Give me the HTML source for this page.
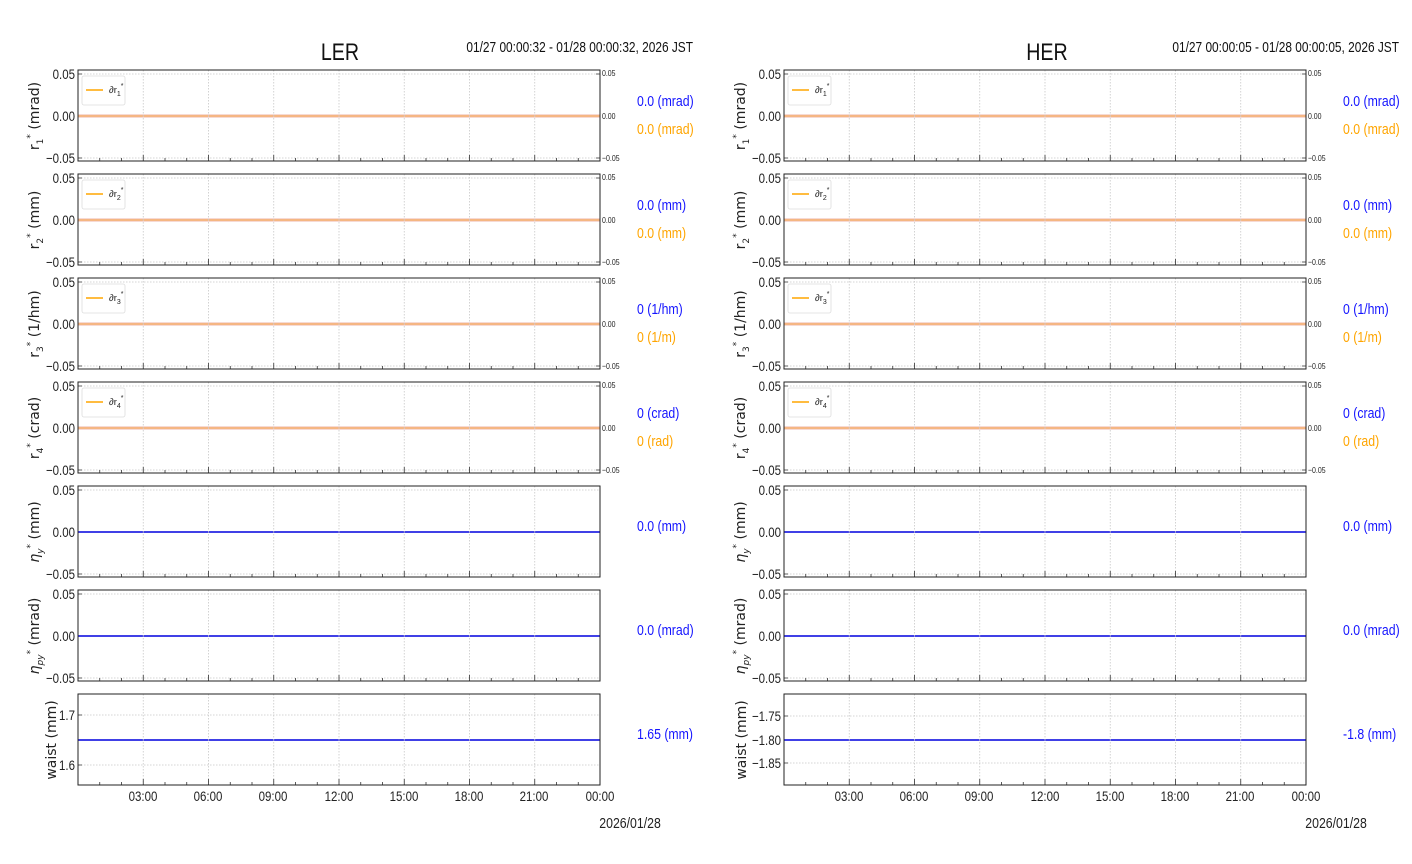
<!DOCTYPE html>
<html><head><meta charset="utf-8"><style>
html,body{margin:0;padding:0;background:#fff;}
svg{display:block;}
.n{font-family:"Liberation Sans Narrow","Liberation Sans",sans-serif;}
.t{font-size:14px;fill:#222;}
.s{font-size:8.5px;fill:#222;}
.yl{font-family:"DejaVu Sans","Liberation Sans",sans-serif;font-size:14px;fill:#222;}
.b{fill:#1515ff;font-size:15px;}
.o{fill:#ffa500;font-size:15px;}
.sq text, text.sq{transform-box:fill-box;transform:scaleX(.82);}
.sL text, text.sL{transform-origin:left center;}
.sR text, text.sR{transform-origin:right center;}
.sC text, text.sC{transform-origin:center center;}
</style></head><body>
<svg width="1412" height="864" viewBox="0 0 1412 864" xmlns="http://www.w3.org/2000/svg">
<defs>
<g id="fr">
 <g stroke="#c8c8c8" stroke-width="0.8" stroke-dasharray="1.5,1.5">
  <line x1="65.25" y1="0" x2="65.25" y2="91"/><line x1="130.5" y1="0" x2="130.5" y2="91"/>
  <line x1="195.75" y1="0" x2="195.75" y2="91"/><line x1="261" y1="0" x2="261" y2="91"/>
  <line x1="326.25" y1="0" x2="326.25" y2="91"/><line x1="391.5" y1="0" x2="391.5" y2="91"/>
  <line x1="456.75" y1="0" x2="456.75" y2="91"/>
 </g>
 <g stroke="#333" stroke-width="0.8">
  <path d="M21.75 91v-3M43.5 91v-3M87 91v-3M108.75 91v-3M152.25 91v-3M174 91v-3M217.5 91v-3M239.25 91v-3M282.75 91v-3M304.5 91v-3M348 91v-3M369.75 91v-3M413.25 91v-3M435 91v-3M478.5 91v-3M500.25 91v-3"/>
  <path d="M65.25 91v-6M130.5 91v-6M195.75 91v-6M261 91v-6M326.25 91v-6M391.5 91v-6M456.75 91v-6"/>
 </g>
 <rect x="0" y="0" width="522" height="91" fill="none" stroke="#222" stroke-width="1"/>
</g>
<g id="hg">
 <g stroke="#c8c8c8" stroke-width="0.8" stroke-dasharray="1.5,1.5">
  <line x1="0" y1="4" x2="522" y2="4"/><line x1="0" y1="88" x2="522" y2="88"/>
 </g>
 <path d="M0 4h4M0 46h4M0 88h4" stroke="#333" stroke-width="0.8"/>
</g>
<g id="rt"><path d="M522 4h-4M522 46h-4M522 88h-4" stroke="#333" stroke-width="0.8"/></g>
<g id="ol">
 <line x1="0" y1="46" x2="522" y2="46" stroke="#f3cdc6" stroke-width="3.5"/>
 <line x1="0" y1="46" x2="522" y2="46" stroke="#f7a040" stroke-width="1"/>
</g>
<g id="bl"><line x1="0" y1="46" x2="522" y2="46" stroke="#0000dd" stroke-width="1.5"/></g>
<g id="lg"><rect x="4" y="6" width="43" height="29" rx="2" fill="#fff" stroke="#ddd" stroke-width="0.8"/><line x1="8" y1="20" x2="25" y2="20" stroke="#ffa500" stroke-width="1.5"/></g>
</defs>

<!-- LEFT -->
<text x="340" y="60" text-anchor="middle" class="n sq sC" font-size="24" fill="#111">LER</text>
<text x="693" y="52" text-anchor="end" class="n sq sR" font-size="14.5" fill="#111">01/27 00:00:32 - 01/28 00:00:32, 2026 JST</text>
<g class="n t sq sR" text-anchor="end">
<text x="75" y="79">0.05</text><text x="75" y="121">0.00</text><text x="75" y="163">−0.05</text>
<text x="75" y="183">0.05</text><text x="75" y="225">0.00</text><text x="75" y="267">−0.05</text>
<text x="75" y="287">0.05</text><text x="75" y="329">0.00</text><text x="75" y="371">−0.05</text>
<text x="75" y="391">0.05</text><text x="75" y="433">0.00</text><text x="75" y="475">−0.05</text>
<text x="75" y="495">0.05</text><text x="75" y="537">0.00</text><text x="75" y="579">−0.05</text>
<text x="75" y="599">0.05</text><text x="75" y="641">0.00</text><text x="75" y="683">−0.05</text>
<text x="75" y="720">1.7</text><text x="75" y="770">1.6</text>
</g>
<g class="n s sq sL">
<text x="602" y="76">0.05</text><text x="602" y="119">0.00</text><text x="602" y="161">−0.05</text>
<text x="602" y="180">0.05</text><text x="602" y="223">0.00</text><text x="602" y="265">−0.05</text>
<text x="602" y="284">0.05</text><text x="602" y="327">0.00</text><text x="602" y="369">−0.05</text>
<text x="602" y="388">0.05</text><text x="602" y="431">0.00</text><text x="602" y="473">−0.05</text>
</g>
<g transform="translate(78,70)"><use href="#hg"/><use href="#rt"/><use href="#ol"/><use href="#fr"/><use href="#lg"/></g>
<g transform="translate(78,174)"><use href="#hg"/><use href="#rt"/><use href="#ol"/><use href="#fr"/><use href="#lg"/></g>
<g transform="translate(78,278)"><use href="#hg"/><use href="#rt"/><use href="#ol"/><use href="#fr"/><use href="#lg"/></g>
<g transform="translate(78,382)"><use href="#hg"/><use href="#rt"/><use href="#ol"/><use href="#fr"/><use href="#lg"/></g>
<g transform="translate(78,486)"><use href="#hg"/><use href="#bl"/><use href="#fr"/></g>
<g transform="translate(78,590)"><use href="#hg"/><use href="#bl"/><use href="#fr"/></g>
<g transform="translate(78,694)">
 <g stroke="#c8c8c8" stroke-width="0.8" stroke-dasharray="1.5,1.5"><line x1="0" y1="21" x2="522" y2="21"/><line x1="0" y1="71" x2="522" y2="71"/></g>
 <path d="M0 21h4M0 71h4" stroke="#333" stroke-width="0.8"/>
 <use href="#bl"/><use href="#fr"/>
</g>
<g class="n" font-size="9.5" fill="#222">
<text x="109" y="93">∂r<tspan font-size="7" dy="3">1</tspan><tspan font-size="7" dy="-8">*</tspan></text>
<text x="109" y="197">∂r<tspan font-size="7" dy="3">2</tspan><tspan font-size="7" dy="-8">*</tspan></text>
<text x="109" y="301">∂r<tspan font-size="7" dy="3">3</tspan><tspan font-size="7" dy="-8">*</tspan></text>
<text x="109" y="405">∂r<tspan font-size="7" dy="3">4</tspan><tspan font-size="7" dy="-8">*</tspan></text>
</g>
<g class="yl" text-anchor="middle">
<text transform="translate(39,116) rotate(-90)">r<tspan font-size="9" dy="4">1</tspan><tspan font-size="9" dy="-10">*</tspan><tspan dy="6"> (mrad)</tspan></text>
<text transform="translate(39,220) rotate(-90)">r<tspan font-size="9" dy="4">2</tspan><tspan font-size="9" dy="-10">*</tspan><tspan dy="6"> (mm)</tspan></text>
<text transform="translate(39,324) rotate(-90)">r<tspan font-size="9" dy="4">3</tspan><tspan font-size="9" dy="-10">*</tspan><tspan dy="6"> (1/hm)</tspan></text>
<text transform="translate(39,428) rotate(-90)">r<tspan font-size="9" dy="4">4</tspan><tspan font-size="9" dy="-10">*</tspan><tspan dy="6"> (crad)</tspan></text>
<text transform="translate(39,532) rotate(-90)"><tspan font-style="italic">η</tspan><tspan font-size="9" dy="4" font-style="italic">y</tspan><tspan font-size="9" dy="-10">*</tspan><tspan dy="6"> (mm)</tspan></text>
<text transform="translate(39,636) rotate(-90)"><tspan font-style="italic">η</tspan><tspan font-size="9" dy="4" font-style="italic">py</tspan><tspan font-size="9" dy="-10">*</tspan><tspan dy="6"> (mrad)</tspan></text>
<text transform="translate(56,740) rotate(-90)">waist (mm)</text>
</g>
<g class="n sq sL">
<text x="637" y="106" class="b">0.0 (mrad)</text><text x="637" y="134" class="o">0.0 (mrad)</text>
<text x="637" y="210" class="b">0.0 (mm)</text><text x="637" y="238" class="o">0.0 (mm)</text>
<text x="637" y="314" class="b">0 (1/hm)</text><text x="637" y="342" class="o">0 (1/m)</text>
<text x="637" y="418" class="b">0 (crad)</text><text x="637" y="446" class="o">0 (rad)</text>
<text x="637" y="531" class="b">0.0 (mm)</text>
<text x="637" y="635" class="b">0.0 (mrad)</text>
<text x="637" y="739" class="b">1.65 (mm)</text>
</g>
<g class="n t sq sC" text-anchor="middle">
<text x="143" y="801">03:00</text><text x="208" y="801">06:00</text><text x="273" y="801">09:00</text><text x="339" y="801">12:00</text>
<text x="404" y="801">15:00</text><text x="469" y="801">18:00</text><text x="534" y="801">21:00</text><text x="600" y="801">00:00</text>
<text x="630" y="828" font-size="15">2026/01/28</text>
</g>

<!-- RIGHT -->
<text x="1047" y="60" text-anchor="middle" class="n sq sC" font-size="24" fill="#111">HER</text>
<text x="1399" y="52" text-anchor="end" class="n sq sR" font-size="14.5" fill="#111">01/27 00:00:05 - 01/28 00:00:05, 2026 JST</text>
<g class="n t sq sR" text-anchor="end">
<text x="781" y="79">0.05</text><text x="781" y="121">0.00</text><text x="781" y="163">−0.05</text>
<text x="781" y="183">0.05</text><text x="781" y="225">0.00</text><text x="781" y="267">−0.05</text>
<text x="781" y="287">0.05</text><text x="781" y="329">0.00</text><text x="781" y="371">−0.05</text>
<text x="781" y="391">0.05</text><text x="781" y="433">0.00</text><text x="781" y="475">−0.05</text>
<text x="781" y="495">0.05</text><text x="781" y="537">0.00</text><text x="781" y="579">−0.05</text>
<text x="781" y="599">0.05</text><text x="781" y="641">0.00</text><text x="781" y="683">−0.05</text>
<text x="781" y="721">−1.75</text><text x="781" y="745">−1.80</text><text x="781" y="768">−1.85</text>
</g>
<g class="n s sq sL">
<text x="1308" y="76">0.05</text><text x="1308" y="119">0.00</text><text x="1308" y="161">−0.05</text>
<text x="1308" y="180">0.05</text><text x="1308" y="223">0.00</text><text x="1308" y="265">−0.05</text>
<text x="1308" y="284">0.05</text><text x="1308" y="327">0.00</text><text x="1308" y="369">−0.05</text>
<text x="1308" y="388">0.05</text><text x="1308" y="431">0.00</text><text x="1308" y="473">−0.05</text>
</g>
<g transform="translate(784,70)"><use href="#hg"/><use href="#rt"/><use href="#ol"/><use href="#fr"/><use href="#lg"/></g>
<g transform="translate(784,174)"><use href="#hg"/><use href="#rt"/><use href="#ol"/><use href="#fr"/><use href="#lg"/></g>
<g transform="translate(784,278)"><use href="#hg"/><use href="#rt"/><use href="#ol"/><use href="#fr"/><use href="#lg"/></g>
<g transform="translate(784,382)"><use href="#hg"/><use href="#rt"/><use href="#ol"/><use href="#fr"/><use href="#lg"/></g>
<g transform="translate(784,486)"><use href="#hg"/><use href="#bl"/><use href="#fr"/></g>
<g transform="translate(784,590)"><use href="#hg"/><use href="#bl"/><use href="#fr"/></g>
<g transform="translate(784,694)">
 <g stroke="#c8c8c8" stroke-width="0.8" stroke-dasharray="1.5,1.5"><line x1="0" y1="22" x2="522" y2="22"/><line x1="0" y1="69" x2="522" y2="69"/></g>
 <path d="M0 22h4M0 46h4M0 69h4" stroke="#333" stroke-width="0.8"/>
 <use href="#bl"/><use href="#fr"/>
</g>
<g class="n" font-size="9.5" fill="#222">
<text x="815" y="93">∂r<tspan font-size="7" dy="3">1</tspan><tspan font-size="7" dy="-8">*</tspan></text>
<text x="815" y="197">∂r<tspan font-size="7" dy="3">2</tspan><tspan font-size="7" dy="-8">*</tspan></text>
<text x="815" y="301">∂r<tspan font-size="7" dy="3">3</tspan><tspan font-size="7" dy="-8">*</tspan></text>
<text x="815" y="405">∂r<tspan font-size="7" dy="3">4</tspan><tspan font-size="7" dy="-8">*</tspan></text>
</g>
<g class="yl" text-anchor="middle">
<text transform="translate(745,116) rotate(-90)">r<tspan font-size="9" dy="4">1</tspan><tspan font-size="9" dy="-10">*</tspan><tspan dy="6"> (mrad)</tspan></text>
<text transform="translate(745,220) rotate(-90)">r<tspan font-size="9" dy="4">2</tspan><tspan font-size="9" dy="-10">*</tspan><tspan dy="6"> (mm)</tspan></text>
<text transform="translate(745,324) rotate(-90)">r<tspan font-size="9" dy="4">3</tspan><tspan font-size="9" dy="-10">*</tspan><tspan dy="6"> (1/hm)</tspan></text>
<text transform="translate(745,428) rotate(-90)">r<tspan font-size="9" dy="4">4</tspan><tspan font-size="9" dy="-10">*</tspan><tspan dy="6"> (crad)</tspan></text>
<text transform="translate(745,532) rotate(-90)"><tspan font-style="italic">η</tspan><tspan font-size="9" dy="4" font-style="italic">y</tspan><tspan font-size="9" dy="-10">*</tspan><tspan dy="6"> (mm)</tspan></text>
<text transform="translate(745,636) rotate(-90)"><tspan font-style="italic">η</tspan><tspan font-size="9" dy="4" font-style="italic">py</tspan><tspan font-size="9" dy="-10">*</tspan><tspan dy="6"> (mrad)</tspan></text>
<text transform="translate(746,740) rotate(-90)">waist (mm)</text>
</g>
<g class="n sq sL">
<text x="1343" y="106" class="b">0.0 (mrad)</text><text x="1343" y="134" class="o">0.0 (mrad)</text>
<text x="1343" y="210" class="b">0.0 (mm)</text><text x="1343" y="238" class="o">0.0 (mm)</text>
<text x="1343" y="314" class="b">0 (1/hm)</text><text x="1343" y="342" class="o">0 (1/m)</text>
<text x="1343" y="418" class="b">0 (crad)</text><text x="1343" y="446" class="o">0 (rad)</text>
<text x="1343" y="531" class="b">0.0 (mm)</text>
<text x="1343" y="635" class="b">0.0 (mrad)</text>
<text x="1343" y="739" class="b">-1.8 (mm)</text>
</g>
<g class="n t sq sC" text-anchor="middle">
<text x="849" y="801">03:00</text><text x="914" y="801">06:00</text><text x="979" y="801">09:00</text><text x="1045" y="801">12:00</text>
<text x="1110" y="801">15:00</text><text x="1175" y="801">18:00</text><text x="1240" y="801">21:00</text><text x="1306" y="801">00:00</text>
<text x="1336" y="828" font-size="15">2026/01/28</text>
</g>
</svg>
</body></html>
